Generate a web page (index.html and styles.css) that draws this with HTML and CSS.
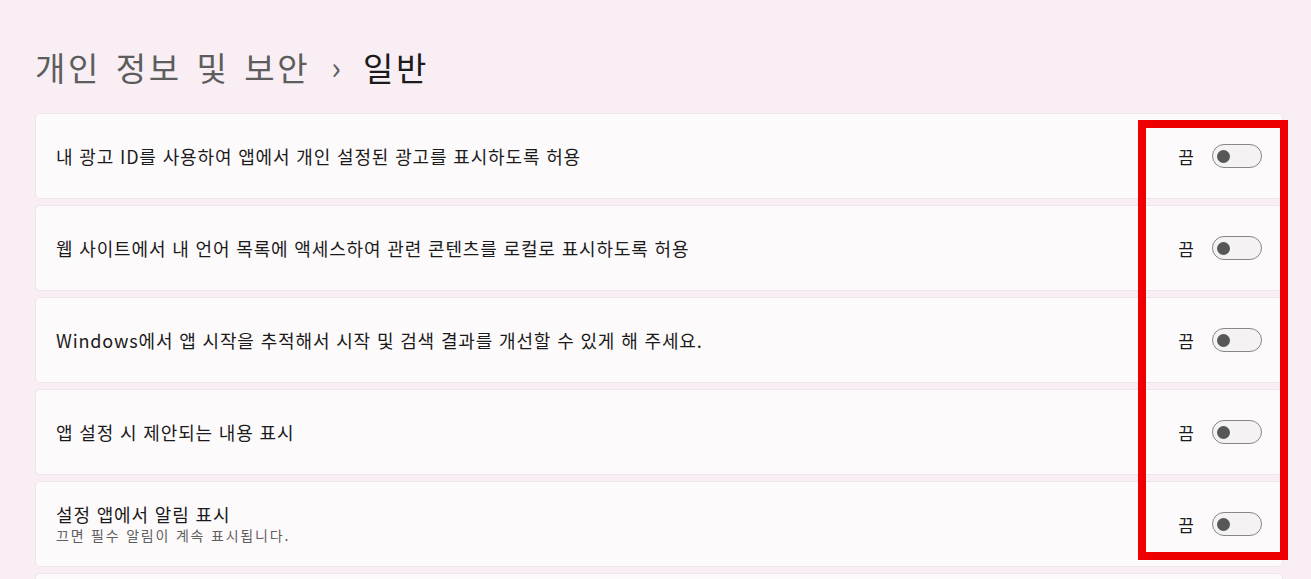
FILE: index.html
```html
<!DOCTYPE html>
<html lang="ko">
<head>
<meta charset="utf-8">
<link rel="stylesheet" href="styles.css">
</head>
<body>
<div class="page">
  <h1 class="title"><span class="crumb">개인 정보 및 보안</span><span class="sep">›</span><span class="current">일반</span></h1>
  <div class="list">
    <div class="card">
      <div class="text"><div class="label">내 광고 ID를 사용하여 앱에서 개인 설정된 광고를 표시하도록 허용</div></div>
      <div class="ctrl"><span class="state">끔</span><span class="toggle"><span class="knob"></span></span></div>
    </div>
    <div class="card">
      <div class="text"><div class="label">웹 사이트에서 내 언어 목록에 액세스하여 관련 콘텐츠를 로컬로 표시하도록 허용</div></div>
      <div class="ctrl"><span class="state">끔</span><span class="toggle"><span class="knob"></span></span></div>
    </div>
    <div class="card">
      <div class="text"><div class="label">Windows에서 앱 시작을 추적해서 시작 및 검색 결과를 개선할 수 있게 해 주세요.</div></div>
      <div class="ctrl"><span class="state">끔</span><span class="toggle"><span class="knob"></span></span></div>
    </div>
    <div class="card">
      <div class="text"><div class="label">앱 설정 시 제안되는 내용 표시</div></div>
      <div class="ctrl"><span class="state">끔</span><span class="toggle"><span class="knob"></span></span></div>
    </div>
    <div class="card">
      <div class="text"><div class="label">설정 앱에서 알림 표시</div><div class="sub">끄면 필수 알림이 계속 표시됩니다.</div></div>
      <div class="ctrl"><span class="state">끔</span><span class="toggle"><span class="knob"></span></span></div>
    </div>
    <div class="card"></div>
  </div>
  <div class="highlight"></div>
</div>
</body>
</html>
```
FILE: styles.css
```css
html, body {
  margin: 0;
  padding: 0;
  background: #f8eef3;
  overflow: hidden;
}
body {
  font-family: "Noto Sans CJK KR", "Noto Sans", sans-serif;
  color: #1b1b1b;
}
.page {
  position: relative;
  width: 1311px;
  height: 579px;
  padding: 0 28px 0 35px;
  box-sizing: border-box;
  overflow: hidden;
}
.title {
  margin: 0;
  padding-top: 44px;
  height: 113px;
  box-sizing: border-box;
  font-weight: 400;
  font-size: 33px;
  line-height: 46px;
  display: flex;
  align-items: flex-start;
  white-space: nowrap;
}
.crumb {
  color: #5d5d5d;
  letter-spacing: 2.6px;
  word-spacing: 3px;
}
.sep {
  color: #5d5d5d;
  font-size: 32px;
  line-height: 44px;
  margin: 0 22px 0 21px;
}
.current {
  color: #1b1b1b;
  letter-spacing: 2.6px;
}
.list {
  display: flex;
  flex-direction: column;
  gap: 6px;
}
.card {
  height: 86px;
  flex: none;
  box-sizing: border-box;
  background: #fdfafc;
  border: 1px solid #ece6ea;
  border-radius: 5px;
  display: flex;
  align-items: center;
  padding: 0 20px 0 20px;
}
.text {
  flex: 1;
}
.label {
  font-size: 18px;
  line-height: 22px;
  letter-spacing: 0.85px;
  color: #1b1b1b;
}
.sub {
  font-size: 14px;
  line-height: 20px;
  letter-spacing: 1.8px;
  color: #5f5f5f;
}
.ctrl {
  display: flex;
  align-items: center;
  gap: 18px;
}
.state {
  font-size: 17px;
  color: #1b1b1b;
}
.toggle {
  width: 50px;
  height: 24px;
  border: 1px solid #878787;
  border-radius: 12px;
  background: #f4f2f3;
  display: flex;
  align-items: center;
  padding-left: 4px;
  box-sizing: border-box;
}
.knob {
  width: 13px;
  height: 13px;
  border-radius: 50%;
  background: #575757;
}
.highlight {
  position: absolute;
  left: 1138px;
  top: 120px;
  width: 150px;
  height: 440px;
  border: 8px solid #ee0000;
  box-sizing: border-box;
}
```
